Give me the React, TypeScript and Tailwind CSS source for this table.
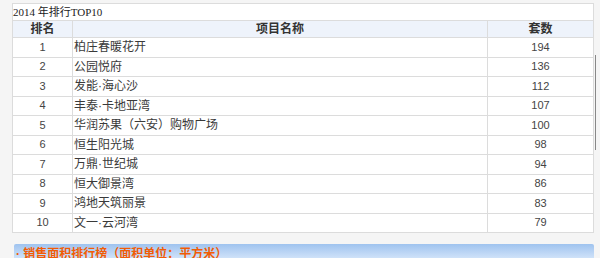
const rows: [number, string, number][] = [
  [1, "柏庄春暖花开", 194],
  [2, "公园悦府", 136],
  [3, "发能·海心沙", 112],
  [4, "丰泰·卡地亚湾", 107],
  [5, "华润苏果（六安）购物广场", 100],
  [6, "恒生阳光城", 98],
  [7, "万鼎·世纪城", 94],
  [8, "恒大御景湾", 86],
  [9, "鸿地天筑丽景", 83],
  [10, "文一·云河湾", 79],
];

const cjk = "font-['Liberation_Sans','Noto_Sans_CJK_SC',sans-serif]";

export default function App() {
  return (
    <div className={`relative w-[600px] h-[258px] overflow-hidden bg-[#f5f5f5] ${cjk}`}>
      <div className="pl-3 pt-[3px] w-[594px]">
        <div className="border border-[#dcdcdc] bg-white">
          {/* TITLE */}
          <div className="h-[16px] flex items-center text-[11px] leading-none text-[#222] font-['Liberation_Serif','Noto_Sans_CJK_SC',serif]">
            2014 年排行TOP10
          </div>

          {/* HEADER */}
          <div className="flex h-[17px] bg-[#eef3fb] border-t border-[#dcdcdc] text-[12px] font-bold text-[#333] leading-none">
            <div className="w-[60px] flex items-center justify-center border-r border-[#dcdcdc]">排名</div>
            <div className="w-[415px] flex items-center justify-center border-r border-[#dcdcdc]">项目名称</div>
            <div className="flex-1 flex items-center justify-center">套数</div>
          </div>

          {/* ROWS */}
          {rows.map(([rank, name, count]) => (
            <div
              key={rank}
              className="flex h-[19.5px] border-t border-[#dcdcdc] text-[12px] leading-none text-[#3a3a3a]"
            >
              <div className="w-[60px] flex items-center justify-center border-r border-[#dcdcdc] text-[11px] text-[#444]">
                {rank}
              </div>
              <div className="w-[415px] flex items-center pl-px border-r border-[#dcdcdc]">{name}</div>
              <div className="flex-1 flex items-center justify-center text-[11px] text-[#444]">{count}</div>
            </div>
          ))}
        </div>

        {/* NEXT SECTION */}
        <div className="mt-[11px] ml-[2px] h-[20px] rounded-t-[2px] bg-gradient-to-b from-[#9fc3ef] to-[#e4effc] flex items-center pl-[2px] text-[12px] font-bold text-[#f25c05] leading-none">
          · 销售面积排行榜（面积单位：平方米）
        </div>
      </div>

      {/* scrollbar edge */}
      <div className="absolute left-[595px] top-[55px] w-px h-[95px] bg-[#888]" />
    </div>
  );
}
